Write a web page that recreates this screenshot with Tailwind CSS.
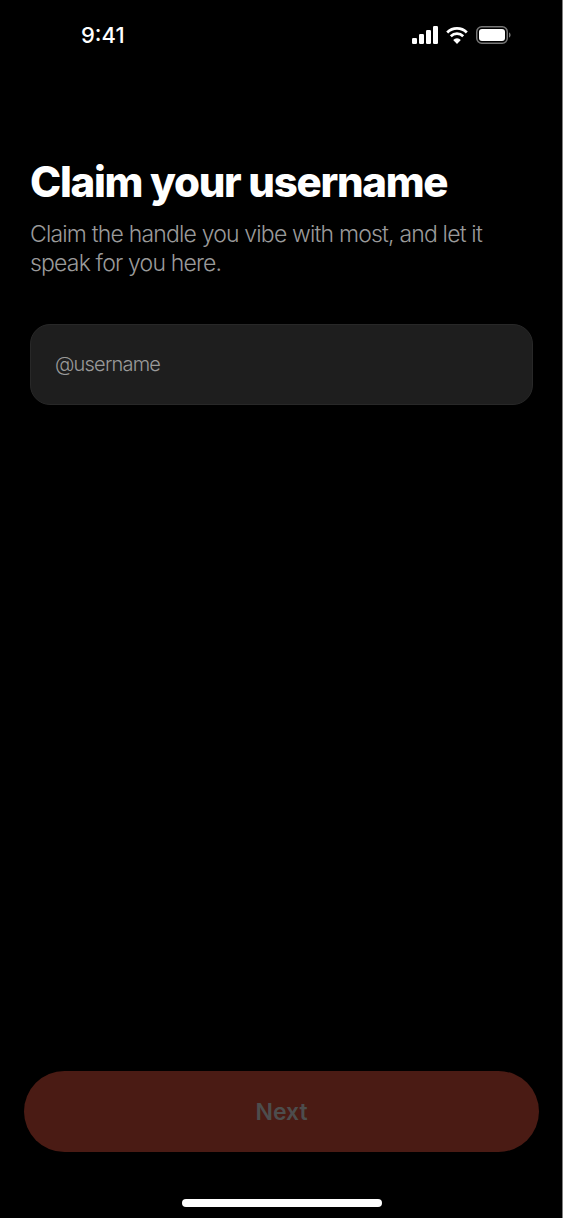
<!DOCTYPE html>
<html lang="en">
  <head>
    <meta charset="UTF-8">
    <title>Claim your username</title>
    <script src="https://cdn.jsdelivr.net/npm/@tailwindcss/browser@4"></script>
  </head>

<body class="bg-black font-['Inter',sans-serif]">
  <div class="w-[563px] h-[1218px] flex flex-col overflow-hidden bg-black shadow-[inset_-1px_0_0_#808080]">

    <!-- Status bar -->
    <div class="h-[70px] flex items-center justify-between pl-[81px] pr-[52px] text-white">
      <span class="text-[22px] leading-none font-medium">9:41</span>
      <div class="flex items-center gap-[8px]">
        <svg width="26" height="18" viewBox="0 0 26 18" fill="#fff">
          <rect x="0" y="12" width="5" height="6" rx="1.2"/>
          <rect x="7" y="8" width="5" height="10" rx="1.2"/>
          <rect x="14" y="4" width="5" height="14" rx="1.2"/>
          <rect x="21" y="0" width="5" height="18" rx="1.2"/>
        </svg>
        <svg width="22" height="18" viewBox="0 0 22 18" fill="none" stroke="#fff" stroke-width="2.8">
          <path d="M1.2 6.400a14 14 0 0 1 19.600 0"/>
          <path d="M4.800 10.200a9 9 0 0 1 12.400 0"/>
          <path d="M11 18l-3.800-4a5.200 5.200 0 0 1 7.600 0z" fill="#fff" stroke="none"/>
        </svg>
        <svg width="35" height="18" viewBox="0 0 35 18" fill="none">
          <rect x="0.750" y="0.750" width="30.500" height="16.500" rx="5" stroke="#777" stroke-width="1.500"/>
          <rect x="3" y="3" width="26" height="12" rx="3" fill="#fff"/>
          <path d="M33 6.500v5c1-.3 1.600-1.400 1.600-2.500S34 6.800 33 6.500z" fill="#777"/>
        </svg>
      </div>
    </div>

    <!-- Heading -->
    <div class="px-[30px] pt-[88px]">
      <h1 class="text-[42px] leading-[48px] font-extrabold text-white tracking-[-1.3px]">Claim your username</h1>
      <p class="mt-[14px] text-[23px] leading-[29px] font-light text-[#9a9a9a] tracking-[-0.82px]">Claim the handle you vibe with most, and let it speak for you here.</p>
    </div>

    <!-- Input -->
    <div class="px-[30px] mt-[46px]">
      <div class="h-[81px] flex items-center px-[24px] pb-[2px] rounded-[20px] bg-[#1e1e1e] border border-[#282828]">
        <span class="text-[20px] font-light text-[#9a9a9a] tracking-[-0.8px]">@username</span>
      </div>
    </div>

    <!-- Next button -->
    <div class="mt-auto px-[24px]">
      <button class="w-full h-[81px] pt-[1px] rounded-full bg-[#4a1b14] text-[23px] font-semibold text-[#4d4d4d]">Next</button>
    </div>

    <!-- Home indicator -->
    <div class="flex justify-center pt-[47px] pb-[11px]">
      <div class="w-[200px] h-[8px] rounded-full bg-white"></div>
    </div>
  </div>
</body>
</html>
